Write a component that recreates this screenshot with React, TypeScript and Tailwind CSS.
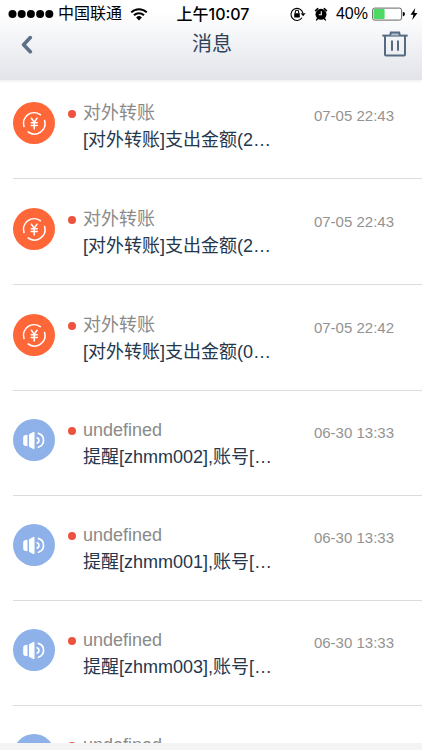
type Kind = "transfer" | "notice";

type Message = {
  id: number;
  kind: Kind;
  title: string;
  body: string;
  time: string;
};

const messages: Message[] = [
  { id: 1, kind: "transfer", title: "对外转账", body: "[对外转账]支出金额(2…", time: "07-05 22:43" },
  { id: 2, kind: "transfer", title: "对外转账", body: "[对外转账]支出金额(2…", time: "07-05 22:43" },
  { id: 3, kind: "transfer", title: "对外转账", body: "[对外转账]支出金额(0…", time: "07-05 22:42" },
  { id: 4, kind: "notice", title: "undefined", body: "提醒[zhmm002],账号[…", time: "06-30 13:33" },
  { id: 5, kind: "notice", title: "undefined", body: "提醒[zhmm001],账号[…", time: "06-30 13:33" },
  { id: 6, kind: "notice", title: "undefined", body: "提醒[zhmm003],账号[…", time: "06-30 13:33" },
  { id: 7, kind: "notice", title: "undefined", body: "", time: "" },
];

const TransferIcon = () => (
  <svg viewBox="0 0 42 42" className="size-[42px] shrink-0" aria-hidden="true">
    <circle cx="21" cy="21" r="21" fill="#ff6638" />
    <g fill="none" stroke="#fff" strokeLinecap="round">
      <path d="M11 24.5A10.6 10.6 0 0 1 27.300 12.700" strokeWidth="1.600" />
      <path d="M31.600 18.500A10.600 10.600 0 0 1 15.200 30" strokeWidth="1.600" />
      <path d="M18.400 16.200l2.800 4 2.800-4M21.200 20.200v6.800M18.200 20.800h6M18.200 23.600h6" strokeWidth="1.500" />
    </g>
  </svg>
);

const NoticeIcon = () => (
  <svg viewBox="0 0 42 42" className="size-[42px] shrink-0" aria-hidden="true">
    <circle cx="21" cy="21" r="21" fill="#8db1e8" />
    <path d="M10.200 18.200q0-1.600 1.400-1.900l2.900-.6v11.600l-2.900-.6q-1.400-.3-1.400-1.900z" fill="#fff" />
    <path d="M16 15.200l4.300-2.300q1.200-.5 1.200.8v15.600q0 1.300-1.200.8L16 27.800z" fill="#fff" />
    <g fill="none" stroke="#fff" strokeLinecap="round" strokeWidth="1.700">
      <path d="M24.200 18.800a2.800 2.800 0 0 1 0 5.200" />
      <path d="M25.400 14.400a7.200 7.200 0 0 1 0 13.800" />
    </g>
  </svg>
);

const StatusBar = () => (
  <div className="grid grid-cols-[1fr_auto_1fr] items-center h-7 pl-2 pr-1 text-base leading-7 text-black">
    <div className="flex items-center">
      <svg viewBox="0 0 46 10" className="w-[46px] h-[10px]" aria-hidden="true">
        {[4.5, 13.7, 22.9, 32.1, 41.3].map((cx) => (
          <circle key={cx} cx={cx} cy="5" r="4" />
        ))}
      </svg>
      <span className="ml-1">中国联通</span>
      <svg viewBox="0 0 18 14" className="ml-2 w-[18px] h-[14px]" aria-hidden="true">
        <g fill="none" stroke="#000" strokeWidth="2">
          <path d="M1.2 5.4a11 11 0 0 1 15.600 0" />
          <path d="M4 8.300a7 7 0 0 1 10 0" />
        </g>
        <path d="M9 13.400l-2.900-3a4.100 4.100 0 0 1 5.800 0z" />
      </svg>
    </div>
    <time className="font-['Inter','Noto_Sans_CJK_SC',sans-serif] font-medium">上午10:07</time>
    <div className="flex items-center justify-end">
      <svg viewBox="0 0 16 14" className="w-4 h-[14px]" aria-hidden="true">
        <path d="M12 10.800A6 6 0 1 1 12.900 6.200" fill="none" stroke="#000" strokeWidth="1.100" />
        <path d="M10.600 6.200h5l-2.500 3z" />
        <rect x="4.200" y="6.300" width="5.600" height="4.300" rx=".5" />
        <path d="M5.300 6.500V5a1.700 1.700 0 0 1 3.400 0v1.500" fill="none" stroke="#000" strokeWidth="1.100" />
      </svg>
      <svg viewBox="0 0 14 14" className="ml-2 w-[14px] h-[14px]" aria-hidden="true">
        <circle cx="7" cy="7.300" r="5.500" />
        <path d="M1.500 3.600l2.200-2M12.500 3.600l-2.200-2M3.500 11.800l-.9 1.100M10.500 11.800l.9 1.100" stroke="#000" strokeWidth="1.500" strokeLinecap="round" />
        <path d="M7.300 4.300V7.800H4.800" fill="none" stroke="#fff" strokeWidth="1.100" />
      </svg>
      <span className="ml-2">40%</span>
      <svg viewBox="0 0 34 14" className="ml-1 w-[34px] h-[14px]" aria-hidden="true">
        <rect x=".6" y="1.100" width="29" height="12" rx="2" fill="#fff" stroke="#666" />
        <rect x="1.600" y="2.100" width="11" height="10" rx="1" fill="#4cd964" />
        <path d="M30.800 4.800q2.200.4 2.200 2.300t-2.200 2.300z" />
      </svg>
      <svg viewBox="0 0 8 12" className="ml-1 w-2 h-3" aria-hidden="true">
        <path d="M5.200 0L.5 6.800h2.900L2.200 12l5.300-7H4.400z" />
      </svg>
    </div>
  </div>
);

const Header = () => (
  <header className="h-20 bg-linear-to-b from-white from-15% to-[#e2e4ea] shadow-[0_1px_3px_#e8eaee]">
    <StatusBar />
    <div className="grid grid-cols-[1fr_auto_1fr] items-center pl-4 pr-[14px]">
      <button type="button" aria-label="返回" className="justify-self-start pl-1">
        <svg viewBox="0 0 14 20" className="w-[14px] h-5" aria-hidden="true">
          <path d="M10.300 3.600L3.600 10.700l6.700 7" fill="none" stroke="#5c7087" strokeWidth="3.600" strokeLinecap="round" strokeLinejoin="round" />
        </svg>
      </button>
      <h1 className="text-xl leading-8 text-[#2f4358]">消息</h1>
      <button type="button" aria-label="删除" className="justify-self-end">
        <svg viewBox="0 0 26 26" className="w-[26px] h-[26px]" aria-hidden="true">
          <g fill="none" stroke="#566b82" strokeWidth="2">
            <path d="M.3 4.600h25.400" />
            <path d="M8.300 4.400l.5-2.900h8.400l.5 2.900" fill="#b4bfcb" />
            <path d="M3 4.600v19q0 1 1 1h18q1 0 1-1v-19" />
            <path d="M10 10.200v8.800M16 10.200v8.800" strokeLinecap="round" />
          </g>
        </svg>
      </button>
    </div>
  </header>
);

const MessageRow = ({ message }: { message: Message }) => {
  const isTransfer = message.kind === "transfer";

  return (
    <li className={isTransfer ? "pl-[13px] pt-[29px] first:pt-[22px]" : "pl-[13px] pt-7"}>
      <a href="#" className="flex h-[77px] border-b border-[#dcdcdc]">
        {isTransfer ? <TransferIcon /> : <NoticeIcon />}
        <span className="mt-2 ml-[13px] size-2 shrink-0 rounded-full bg-[#ee5340]" />
        <div className="-mt-0.5 ml-[7px] min-w-0 flex-1 text-lg leading-[27px]">
          <p className="truncate text-[#8a8a8a]">{message.title}</p>
          <p className="truncate text-[#24374d]">{message.body}</p>
        </div>
        <time className="mr-7 text-[15px] leading-[27px] text-[#939393]">{message.time}</time>
      </a>
    </li>
  );
};

const App = () => {
  return (
    <div className="flex h-screen flex-col overflow-hidden bg-white font-['Liberation_Sans','Noto_Sans_CJK_SC',sans-serif]">
      <Header />
      <ul className="min-h-0 flex-1 overflow-hidden">
        {messages.map((message) => (
          <MessageRow key={message.id} message={message} />
        ))}
      </ul>
      <footer className="h-[7px] shrink-0 bg-[#f4f4f4]" />
    </div>
  );
};

export default App;
